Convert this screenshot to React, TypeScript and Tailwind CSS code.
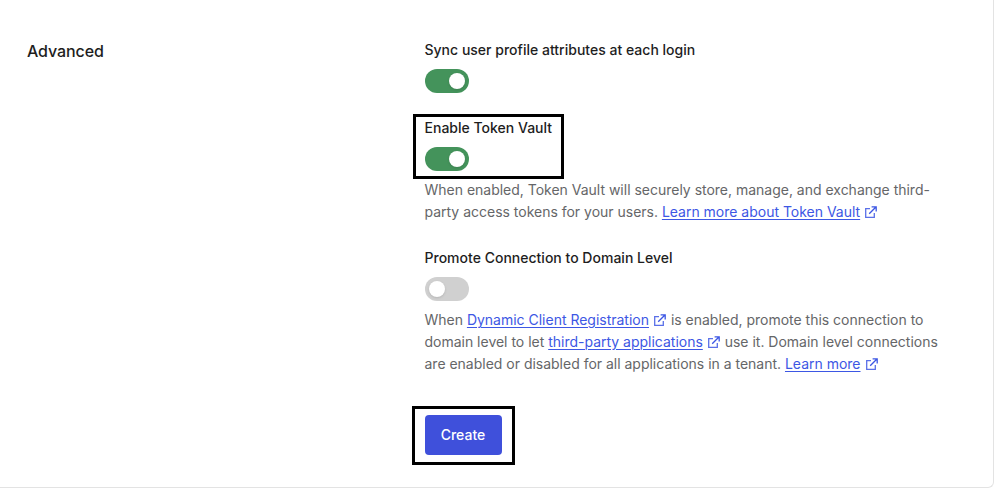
import type { ReactNode } from "react";

function ExternalIcon() {
  return (
    <svg className="mr-px ml-[5px] inline-block h-[12px] w-[12px] align-[-1px]" viewBox="0 0 12 12" fill="none" stroke="currentColor" strokeWidth="1.3">
      <path d="M5 2.7H.7v8.6h8.6V7" strokeOpacity=".85" />
      <path d="M6.6.8h4.6v4.6M11.2.8 4.2 7.8" />
    </svg>
  );
}

function DocLink({ children }: { children: ReactNode }) {
  return (
    <a href="#" className="text-[#3d57e4]">
      <span className="underline decoration-1 underline-offset-2">{children}</span>
      <ExternalIcon />
    </a>
  );
}

function Toggle({ on }: { on: boolean }) {
  return (
    <button
      type="button"
      role="switch"
      aria-checked={on}
      className={`flex h-6 w-11 items-center rounded-full px-1 ${on ? "justify-end bg-[#44935b]" : "justify-start bg-[#d0d0d0]"}`}
    >
      <span className="size-4 rounded-full bg-white shadow-sm" />
    </button>
  );
}

function Label({ children }: { children: ReactNode }) {
  return <div className="mb-2 -ml-[0.5px] h-[22px] text-[14px] leading-[22px] font-medium tracking-[0.01px] whitespace-nowrap text-[#1e1e1e]">{children}</div>;
}

function Hint({ children }: { children: ReactNode }) {
  return <p className="mt-2 -ml-[0.5px] text-[14px] leading-[22px] tracking-[-0.01px] whitespace-nowrap text-[#656668]">{children}</p>;
}

export default function App() {
  return (
    <div className="h-[489px] w-[995px] overflow-hidden bg-white font-['Inter',sans-serif]">
      <main className="flex h-[488px] w-[994px] rounded-br-md border-r border-b border-[#e3e3e3] pl-[27px]">
        <h2 className="w-[398px] shrink-0 pt-[39px] text-[16px] leading-6 font-medium tracking-[-0.1px] text-[#1e1e1e]">Advanced</h2>
        <form className="pt-[39px]">
          <section className="mb-6">
            <Label>Sync user profile attributes at each login</Label>
            <Toggle on />
          </section>

          <section className="mb-6">
            <div className="relative">
              <Label>Enable Token Vault</Label>
              <Toggle on />
              <div className="pointer-events-none absolute -top-[3px] -left-[12px] h-[65px] w-[151px] border-3 border-black" />
            </div>
            <Hint>
              When enabled, Token Vault will securely store, manage, and exchange third-
              <br />
              party access tokens for your users. <DocLink>Learn more about Token Vault</DocLink>
            </Hint>
          </section>

          <section>
            <Label>Promote Connection to Domain Level</Label>
            <Toggle on={false} />
            <Hint>
              When <DocLink>Dynamic Client Registration</DocLink> is enabled, promote this connection to
              <br />
              domain level to let <DocLink>third-party applications</DocLink> use it. Domain level connections
              <br />
              are enabled or disabled for all applications in a tenant. <DocLink>Learn more</DocLink>
            </Hint>
          </section>

          <div className="relative mt-10 w-fit">
            <button type="button" className="h-10 w-[77px] rounded bg-[#3f50db] pr-px pb-0.5 text-[14px] font-medium text-white">
              Create
            </button>
            <div className="pointer-events-none absolute -top-[9px] -left-[13px] h-[59px] w-[103px] border-3 border-black" />
          </div>
        </form>
      </main>
    </div>
  );
}
